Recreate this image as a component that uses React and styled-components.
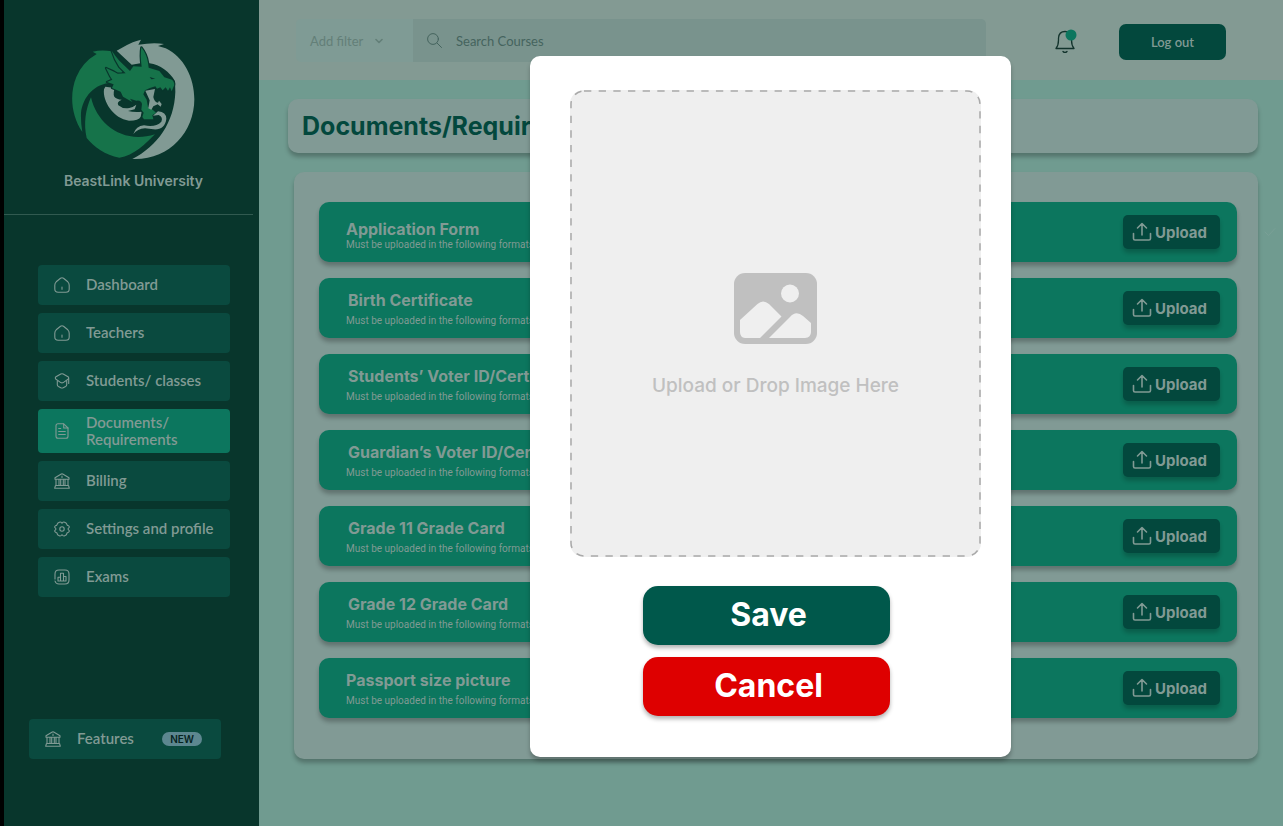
import React from "react";
import styled, { createGlobalStyle } from "styled-components";

const c = {
  black: "#000",
  side: "#08362c",
  item: "#0a4a3f",
  green: "#0c765e",
  deep: "#03483d",
  text: "#819a94",
  page: "#709b90",
  header: "#839a93",
  card: "#819a95",
};

const GlobalStyle = createGlobalStyle`
  *, *::before, *::after { box-sizing: border-box; }
  body { margin: 0; background: ${c.page}; font-family: Inter, "Liberation Sans", sans-serif; }
  button, input { font-family: inherit; }
  h1, h2, p, ul { margin: 0; padding: 0; }
`;

const Shell = styled.div`
  display: grid;
  grid-template-columns: 259px minmax(0, 1fr);
  min-height: 100vh;
`;

const Sidebar = styled.aside`
  display: flex;
  flex-direction: column;
  background: ${c.side};
  border-left: 4px solid ${c.black};
  padding-bottom: 67px;
`;

const Brand = styled.div`
  display: flex;
  flex-direction: column;
  align-items: center;
  gap: 10px;
  margin: 38px 25px 0 29px;
  color: ${c.text};
  font-size: 14px;
  font-weight: 600;
  line-height: 20px;
`;

const Divider = styled.hr`
  width: auto;
  margin: 23px 6px 50px 0;
  border: 0;
  border-top: 1px solid #315a50;
`;

const NavList = styled.ul`
  display: flex;
  flex-direction: column;
  gap: 8px;
  margin: 0 29px 0 34px;
  list-style: none;
`;

const NavLink = styled.a`
  display: flex;
  align-items: center;
  gap: 16px;
  min-height: ${(p) => (p.$active ? 44 : 40)}px;
  padding: 0 12px 1px 16px;
  border-radius: 4px;
  background: ${(p) => (p.$active ? c.green : c.item)};
  color: ${c.text};
  font-family: Lato, sans-serif;
  font-size: 15px;
  font-weight: 600;
  line-height: 17px;
  text-decoration: none;
`;

const FeatureWrap = styled.div`
  margin: auto 38px 0 25px;
`;

const Badge = styled.span`
  margin: 0 7px 0 auto;
  padding: 0 8px;
  border-radius: 7px;
  background: #5d8790;
  color: #06231f;
  font-family: Inter, sans-serif;
  font-size: 10px;
  font-weight: 600;
  line-height: 14px;
`;

const Icon = styled.svg`
  flex: none;
  width: ${(p) => p.$size || 16}px;
  height: ${(p) => p.$size || 16}px;
  fill: none;
  stroke: currentColor;
  stroke-width: ${(p) => p.$weight || 1};
  stroke-linecap: round;
  stroke-linejoin: round;
`;

const Main = styled.main`
  background: ${c.page};
`;

const Header = styled.header`
  display: flex;
  align-items: flex-start;
  height: 80px;
  padding: 19px 57px 0 37px;
  background: ${c.header};
  font-family: Lato, sans-serif;
`;

const SearchGroup = styled.div`
  display: flex;
  flex: 1;
  height: 43px;
  border-radius: 5px;
  overflow: hidden;
`;

const FilterButton = styled.button`
  display: flex;
  align-items: center;
  gap: 12px;
  width: 117px;
  padding: 0 14px;
  border: 0;
  background: #7f9b95;
  color: #637f78;
  font-size: 13px;
`;

const SearchField = styled.label`
  display: flex;
  flex: 1;
  align-items: center;
  gap: 14px;
  padding: 0 14px;
  background: #79938d;
  color: #45645e;
`;

const SearchInput = styled.input`
  flex: 1;
  min-width: 0;
  padding: 0;
  border: 0;
  outline: 0;
  background: transparent;
  font-size: 13px;
  &::placeholder { color: #45645e; opacity: 1; }
`;

const BellButton = styled.button`
  display: flex;
  margin: 10px 41px 0 68px;
  padding: 0;
  border: 0;
  background: transparent;
  color: #12332c;
`;

const LogoutButton = styled.button`
  width: 107px;
  height: 36px;
  margin-top: 5px;
  border: 0;
  border-radius: 7px;
  background: ${c.deep};
  color: ${c.text};
  font-size: 13px;
  font-weight: 600;
`;

const Content = styled.div`
  padding: 19px 25px 67px 29px;
`;

const TitleBar = styled.div`
  padding: 0 14px;
  border-radius: 10px;
  background: ${c.card};
  box-shadow: 0 4px 4px rgba(0, 0, 0, 0.25);
`;

const PageTitle = styled.h1`
  color: ${c.deep};
  font-size: 25px;
  font-weight: 700;
  line-height: 54px;
`;

const Card = styled.section`
  position: relative;
  display: flex;
  flex-direction: column;
  gap: 16px;
  margin: 19px 0 0 6px;
  padding: 30px 21px 41px 25px;
  border-radius: 10px;
  background: ${c.card};
  box-shadow: 0 4px 4px rgba(0, 0, 0, 0.25);
`;

const CheckMark = styled(Icon)`
  position: absolute;
  top: 54px;
  right: -18px;
  color: #7a9f96;
`;

const Row = styled.article`
  display: flex;
  align-items: center;
  justify-content: space-between;
  height: 60px;
  padding: 0 17px 0 27px;
  border-radius: 10px;
  background: ${c.green};
  box-shadow: 0 4px 4px rgba(0, 0, 0, 0.25);
  color: ${c.text};
`;

const RowText = styled.div`
  display: flex;
  flex-direction: column;
  align-self: flex-end;
  gap: ${(p) => (p.$tight ? 0 : 5)}px;
  padding-bottom: 11px;
`;

const RowTitle = styled.h2`
  padding-left: ${(p) => (p.$flush ? 0 : 2)}px;
  font-size: 16px;
  font-weight: 700;
  line-height: 20px;
`;

const RowNote = styled.p`
  font-family: Roboto, "Liberation Sans", sans-serif;
  font-size: 10px;
  line-height: 12px;
`;

const UploadButton = styled.button`
  display: flex;
  align-items: center;
  gap: 3px;
  width: 97px;
  height: 34px;
  padding: 0 9px;
  border: 0;
  border-radius: 5px;
  background: ${c.deep};
  box-shadow: 0 4px 4px rgba(0, 0, 0, 0.2);
  color: ${c.text};
  font-size: 15px;
  font-weight: 700;
`;

const Overlay = styled.div`
  position: absolute;
  inset: 0;
  display: flex;
  align-items: flex-start;
  justify-content: center;
  padding: 56px 1px 0 259px;
`;

const Modal = styled.div`
  width: 481px;
  padding: 34px 30px 41px 40px;
  border-radius: 10px;
  background: #fff;
  box-shadow: 0 4px 4px rgba(0, 0, 0, 0.25);
`;

const DropZone = styled.label`
  position: relative;
  display: flex;
  flex-direction: column;
  align-items: center;
  justify-content: center;
  gap: 28px;
  height: 467px;
  padding-top: 26px;
  border-radius: 14px;
  background: #efefef;
  color: #c0c0c0;
  font-size: 19px;
  font-weight: 500;
  line-height: 28px;
`;

const DashedEdge = styled.svg`
  position: absolute;
  inset: 0;
  width: 100%;
  height: 100%;
  fill: none;
  stroke: #a9a9a9;
  stroke-width: 1.5;
  stroke-dasharray: 7.33 7.33;
`;

const FileInput = styled.input`
  position: absolute;
  inset: 0;
  opacity: 0;
`;

const Actions = styled.div`
  display: flex;
  flex-direction: column;
  gap: 12px;
  width: 320px;
  margin-top: 29px;
  padding-left: 73px;
`;

const ActionButton = styled.button`
  height: 59px;
  padding: 0 0 2px 4px;
  border: 0;
  border-radius: 15px;
  background: ${(p) => (p.$danger ? "#de0000" : "#00584b")};
  box-shadow: 0 3px 4px rgba(0, 0, 0, 0.3);
  color: #fff;
  font-size: 32px;
  font-weight: 700;
`;

const Logo = () => (
  <svg width="126" height="123" viewBox="62 26 378 369" role="img" aria-label="BeastLink dragon">
    <path fill={c.text} d="M199 64 L230 47 Q244 38 272 31 L264 46 Q310 38 341 44 L323 50 L346 57 C400 82 432 145 432 210 C432 310 354 394 246 389 C322 350 372 279 375 188 L374 156 C359 128 328 105 298 102 L270 102 L244 106 Z" />
    <path fill="#16734a" d="M96 308 C62 258 57 193 78 143 Q96 99 139 74 L127 67 Q154 60 184 66 L218 126 L185 160 C132 162 97 203 92 251 Q91 280 96 308 Z" />
    <path fill="#16734a" d="M122 204 C141 286 218 345 314 315 C286 343 251 379 207 385 C165 377 131 353 109 326 C99 283 106 239 122 204 Z" />
    <path fill={c.text} d="M165 172 L194 176 Q187 190 192 202 Q199 210 214 211 Q198 218 204 228 Q218 240 237 236 Q249 233 258 226 L253 240 L233 245 Q251 249 274 247 L271 262 Q266 274 236 274 C190 269 156 216 161 180 Z" />
    <path fill="#16734a" stroke={c.side} strokeWidth="7" paintOrder="stroke" strokeLinejoin="round" d="M184 64 Q197 83 207 94 L239 125 L249 111 L274 112 Q269 77 273 54 Q289 74 293 100 L295 115 L327 125 L342 144 L365 151 Q376 162 369 174 L364 186 L359 174 L353 184 L346 174 L337 183 L330 174 L320 178 L315 171 Q298 176 284 183 L279 195 L289 211 L293 234 L307 241 L317 250 L306 258 L309 270 L281 270 L276 263 L280 250 L273 241 L275 224 Q272 211 258 214 L239 208 L246 218 L218 202 L211 187 L185 176 L190 165 L170 158 L186 151 L180 142 L167 116 L191 127 L202 133 L226 132 L207 113 Q192 91 184 64 Z" />
    <path fill={c.text} d="M285 184 L314 179 L309 203 Q312 219 323 220 L326 214 L334 224 L331 232 L322 225 L309 231 L303 241 L294 237 L298 213 Z" />
    <path fill={c.text} d="M249 314 Q257 290 281 288 Q316 295 333 277 Q339 263 325 257 L308 259 L323 246 Q348 249 348 268 C346 290 331 302 309 300 L284 297 Q261 299 249 314 Z" />
    <path fill={c.side} d="M298 143 L315 148 L303 150 Z" />
  </svg>
);

const icons = {
  home: <><path d="M2.2 4.8 6.500 1.300Q8 .2 9.500 1.300l4.300 3.500q1.400 1.200 1.400 3.500v3.600q0 3.300-3.300 3.300H4.100q-3.300 0-3.300-3.300V8.300q0-2.300 1.400-3.500Z" /><path d="M8 10v2.300" /></>,
  student: <><path d="M6.8 1 2 3.700Q.6 5 2 6.300l4.800 3.300q1.200.7 2.400 0L14 6.300q1.400-1.300 0-2.600L9.200 1Q8 .4 6.800 1Z" /><path d="M3.300 8v3.700q0 1.200 1.100 1.800l2.400 1.200q1.200.5 2.400 0l2.400-1.200q1.100-.6 1.100-1.800V8M14.700 5.500v5" /></>,
  doc: <><path d="M9.700.8H4Q2 .8 2 2.800v10.400q0 2 2 2h8q2 0 2-2V5L9.700.8Z" /><path d="M9.700 1v4H14M4.700 5.500h2M4.700 8.500h6.600M4.700 11.500h6.600" /></>,
  bank: <><path d="M1 4.700 7.300 1q.7-.3 1.400 0L15 4.700v1.500H1ZM2 6.300v6M5 6.300v6M6.700 6.300v6M9.300 6.300v6M11 6.300v6M14 6.300v6M1.500 12.500h13l.8 2.700H.7ZM8 3v1.400" /></>,
  gear: <><path d="M8 2.300C8.800 1.200 9.500.7 10.600 1.200L12 2C13 2.700 12.500 3.700 13.300 4.200C14 4.700 15 4.500 15.300 5.800C15.500 7 14 7.200 14 8C14 8.800 15.500 9 15.300 10.200C15 11.500 14 11.300 13.300 11.800C12.500 12.300 13 13.300 12 14L10.600 14.800C9.500 15.300 8.800 14.800 8 13.700C7.200 14.800 6.500 15.300 5.400 14.800L4 14C3 13.300 3.500 12.300 2.700 11.800C2 11.300 1 11.500.7 10.200C.5 9 2 8.800 2 8C2 7.200.5 7 .7 5.800C1 4.500 2 4.700 2.700 4.200C3.500 3.700 3 2.700 4 2L5.400 1.200C6.500.7 7.200 1.200 8 2.300Z" /><circle cx="8" cy="8" r="2.200" /></>,
  chart: <><path d="M1 10V5q0-4 4-4h6q4 0 4 4v6q0 4-4 4H5q-3.300 0-4-3M4 12V8.300h2.500V12M6.500 12V4.300h3V12M9.500 7.500H12V12M4 12h8" /></>,
};

const NavItem = ({ icon, label, active, badge }) => (
  <NavLink href="#" $active={active} aria-current={active ? "page" : undefined}>
    <Icon viewBox="0 0 16 16" $weight={1.1} aria-hidden="true">{icons[icon]}</Icon>
    <span>{label}</span>
    {badge && <Badge>{badge}</Badge>}
  </NavLink>
);

const nav = [
  ["home", "Dashboard"],
  ["home", "Teachers"],
  ["student", "Students/ classes"],
  ["doc", "Documents/ Requirements"],
  ["bank", "Billing"],
  ["gear", "Settings and profile"],
  ["chart", "Exams"],
];

const documents = [
  { title: "Application Form", tight: true, flush: true },
  { title: "Birth Certificate" },
  { title: "Students’ Voter ID/Certificate" },
  { title: "Guardian’s Voter ID/Certificate" },
  { title: "Grade 11 Grade Card" },
  { title: "Grade 12 Grade Card" },
  { title: "Passport size picture", flush: true },
];

const DocumentRow = ({ title, tight, flush }) => (
  <Row>
    <RowText $tight={tight}>
      <RowTitle $flush={flush}>{title}</RowTitle>
      <RowNote>Must be uploaded in the following formats</RowNote>
    </RowText>
    <UploadButton type="button">
      <Icon $size={20} $weight={1.6} viewBox="0 0 20 20" aria-hidden="true">
        <path d="M10 13V2M5.500 6 10 1.500 14.500 6M1.500 11.500V16.500Q1.500 18 3 18H17Q18.500 18 18.500 16.500V11.500" />
      </Icon>
      Upload
    </UploadButton>
  </Row>
);

export default function App() {
  return (
    <>
      <GlobalStyle />
      <Shell>
        <Sidebar>
          <Brand>
            <Logo />
            <span>BeastLink University</span>
          </Brand>
          <Divider />
          <nav>
            <NavList>
              {nav.map(([icon, label]) => (
                <li key={label}>
                  <NavItem icon={icon} label={label} active={icon === "doc"} />
                </li>
              ))}
            </NavList>
          </nav>
          <FeatureWrap>
            <NavItem icon="bank" label="Features" badge="NEW" />
          </FeatureWrap>
        </Sidebar>
        <Main>
          <Header>
            <SearchGroup>
              <FilterButton type="button">
                Add filter
                <Icon $size={8} $weight={1.6} viewBox="0 0 8 8" aria-hidden="true">
                  <path d="M1 2.500 4 5.500 7 2.500" />
                </Icon>
              </FilterButton>
              <SearchField>
                <Icon $size={15} viewBox="0 0 15 15" aria-hidden="true">
                  <circle cx="6" cy="6" r="5.400" />
                  <path d="m10 10 4.500 4.500" />
                </Icon>
                <SearchInput type="search" placeholder="Search Courses" aria-label="Search courses" />
              </SearchField>
            </SearchGroup>
            <BellButton type="button" aria-label="Notifications">
              <Icon $size={24} $weight={1.3} viewBox="0 0 24 24" aria-hidden="true">
                <path d="M2 19.500C4 17 4.500 14 4.500 11V9Q5 2.500 11 2.500T17.500 9V11C17.500 14 18 17 20 19.500ZM9 22.500Q11 24.500 13 22.500" />
                <circle cx="17" cy="6" r="5.500" fill={c.green} stroke="none" />
              </Icon>
            </BellButton>
            <LogoutButton type="button">Log out</LogoutButton>
          </Header>
          <Content>
            <TitleBar>
              <PageTitle>Documents/Requirements</PageTitle>
            </TitleBar>
            <Card>
              {documents.map((doc) => (
                <DocumentRow key={doc.title} {...doc} />
              ))}
              <CheckMark $size={12} viewBox="0 0 12 12" aria-hidden="true">
                <path d="m1 6 3.500 3.500L11 2.500" />
              </CheckMark>
            </Card>
          </Content>
        </Main>
      </Shell>
      <Overlay>
        <Modal role="dialog" aria-modal="true" aria-label="Upload document">
          <DropZone>
            <DashedEdge aria-hidden="true">
              <rect x="1" y="1" rx="13" style={{ width: "calc(100% - 2px)", height: "calc(100% - 2px)" }} />
            </DashedEdge>
            <svg width="83" height="71" viewBox="0 0 83 71" aria-hidden="true">
              <rect width="83" height="71" rx="11" fill="#c0c0c0" />
              <circle cx="56" cy="20.500" r="9" fill="#efefef" />
              <path fill="#efefef" d="M6 47 23.500 31Q29 26 35 31L47.500 43.500 26 65H11Q6 64.500 6 59ZM35 65 56 44Q62 37 69 43L77 50V59Q77 64.500 71 65Z" />
            </svg>
            <span>Upload or Drop Image Here</span>
            <FileInput type="file" accept="image/*" />
          </DropZone>
          <Actions>
            <ActionButton type="button">Save</ActionButton>
            <ActionButton type="button" $danger>Cancel</ActionButton>
          </Actions>
        </Modal>
      </Overlay>
    </>
  );
}
